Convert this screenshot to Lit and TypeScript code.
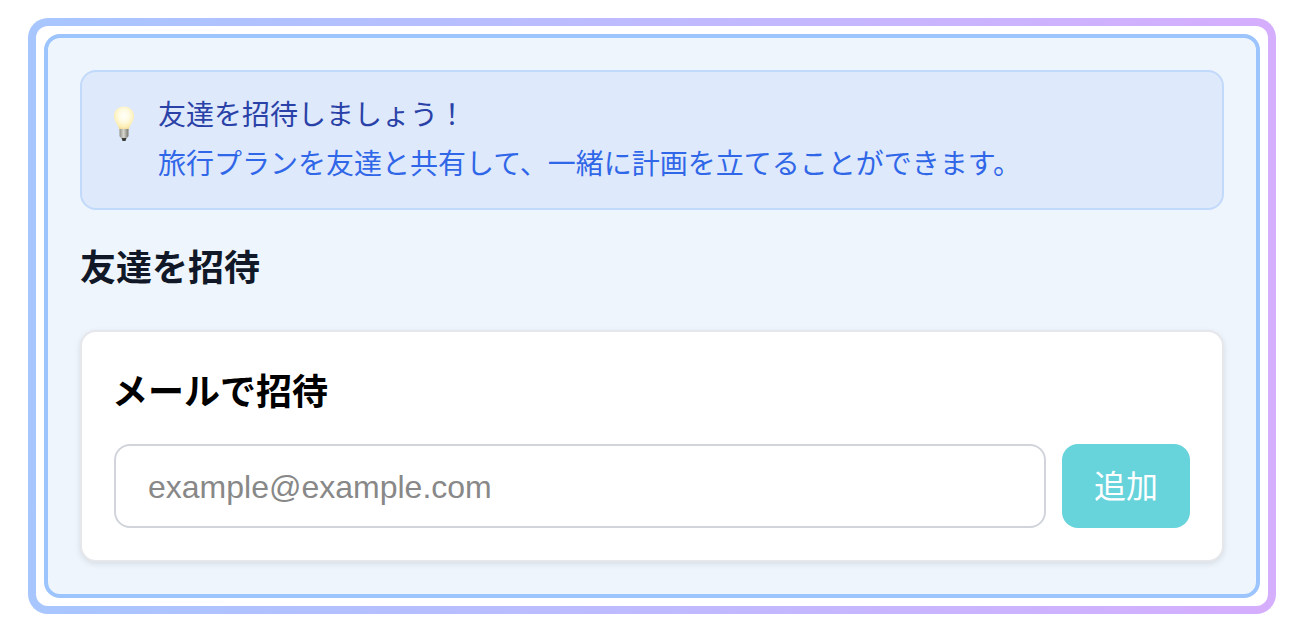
import { LitElement, html, css, svg } from "lit";
import { customElement } from "lit/decorators.js";

const bulb = svg`
<svg class="bulb" viewBox="0 0 24 36" width="24" height="36" aria-hidden="true">
  <defs>
    <radialGradient id="glass" cx="50%" cy="40%" r="60%">
      <stop offset="0" stop-color="#fffffa"/>
      <stop offset="0.45" stop-color="#fffbe2"/>
      <stop offset="0.85" stop-color="#fdeeb4"/>
      <stop offset="1" stop-color="#f3dc98"/>
    </radialGradient>
    <linearGradient id="screw" x1="0" x2="1" y1="0" y2="0">
      <stop offset="0" stop-color="#8f8f88"/>
      <stop offset="0.45" stop-color="#d6d6ce"/>
      <stop offset="1" stop-color="#77776f"/>
    </linearGradient>
  </defs>
  <path d="M12 .5C6 .5 2 4.800 2 10.300c0 5.200 3.700 7.700 5.200 13h9.600c1.500-5.300 5.200-7.800 5.200-13C22 4.800 18 .5 12 .5Z" fill="url(#glass)"/>
  <path d="M7.500 23h9v6.500c0 1.500-1.200 2.500-2.500 2.500h-4c-1.300 0-2.500-1-2.500-2.500Z" fill="url(#screw)"/>
  <path d="M9.500 32h5l-1 3h-3Z" fill="#3b3b38"/>
</svg>`;

@customElement("app-root")
export class AppRoot extends LitElement {
  static styles = css`
    :host {
      display: block;
      box-sizing: border-box;
      width: 1298px;
      height: 634px;
      padding: 18px 22px 20px 28px;
      background: #fff;
      font-family: "Liberation Sans", "Noto Sans CJK JP", sans-serif;
    }
    * { box-sizing: border-box; }
    .outer {
      height: 596px;
      padding: 8px;
      border-radius: 20px;
      background: linear-gradient(90deg, #a8c6fe 0%, #d5aefd 100%);
    }
    .gap {
      height: 100%;
      padding: 8px;
      border-radius: 12px;
      background: #fff;
    }
    .inner {
      height: 100%;
      padding: 32px;
      border: 4px solid #9cc4fd;
      border-radius: 16px;
      background: #eef5fd;
    }
    .alert {
      display: flex;
      height: 140px;
      padding: 26px 30px;
      gap: 22px;
      border: 2px solid #c1d9fa;
      border-radius: 16px;
      background: #dee9fb;
    }
    .bulb { flex: none; margin-top: 8px; }
    .alert-text { font-size: 28px; line-height: 48px; margin-top: -6px; }
    .alert-title { color: #2a42a8; }
    .alert-body { margin-top: 1px; color: #3066e8; }
    h2 {
      margin: 35px 0 37px;
      font-size: 36px;
      line-height: 48px;
      font-weight: 700;
      color: #111827;
    }
    h3 {
      margin: 0 0 29px;
      font-size: 36px;
      line-height: 44px;
      font-weight: 700;
      color: #000;
    }
    .card {
      height: 232px;
      padding: 39px 32px 32px;
      border: 2px solid #e5e7eb;
      border-radius: 16px;
      background: #fff;
      box-shadow: 0 2px 6px rgba(0, 0, 0, 0.1);
    }
    .card h3 { margin-left: -2px; }
    .row { display: flex; gap: 16px; }
    input {
      flex: 1;
      min-width: 0;
      height: 84px;
      padding: 2px 32px 0;
      border: 2px solid #d1d5db;
      border-radius: 16px;
      background: #fff;
      font: inherit;
      font-size: 32px;
      outline: none;
    }
    input::placeholder { color: #888; opacity: 1; }
    button {
      width: 128px;
      height: 84px;
      padding: 0 0 4px;
      border: 0;
      border-radius: 16px;
      background: #67d3db;
      color: #fff;
      font: inherit;
      font-size: 32px;
    }
  `;

  render() {
    return html`
      <div class="outer">
        <div class="gap">
          <div class="inner">
            <div class="alert">
              ${bulb}
              <div class="alert-text">
                <div class="alert-title">友達を招待しましょう！</div>
                <div class="alert-body">旅行プランを友達と共有して、一緒に計画を立てることができます。</div>
              </div>
            </div>
            <h2>友達を招待</h2>
            <div class="card">
              <h3>メールで招待</h3>
              <div class="row">
                <input type="email" placeholder="example@example.com" />
                <button>追加</button>
              </div>
            </div>
          </div>
        </div>
      </div>
    `;
  }
}
